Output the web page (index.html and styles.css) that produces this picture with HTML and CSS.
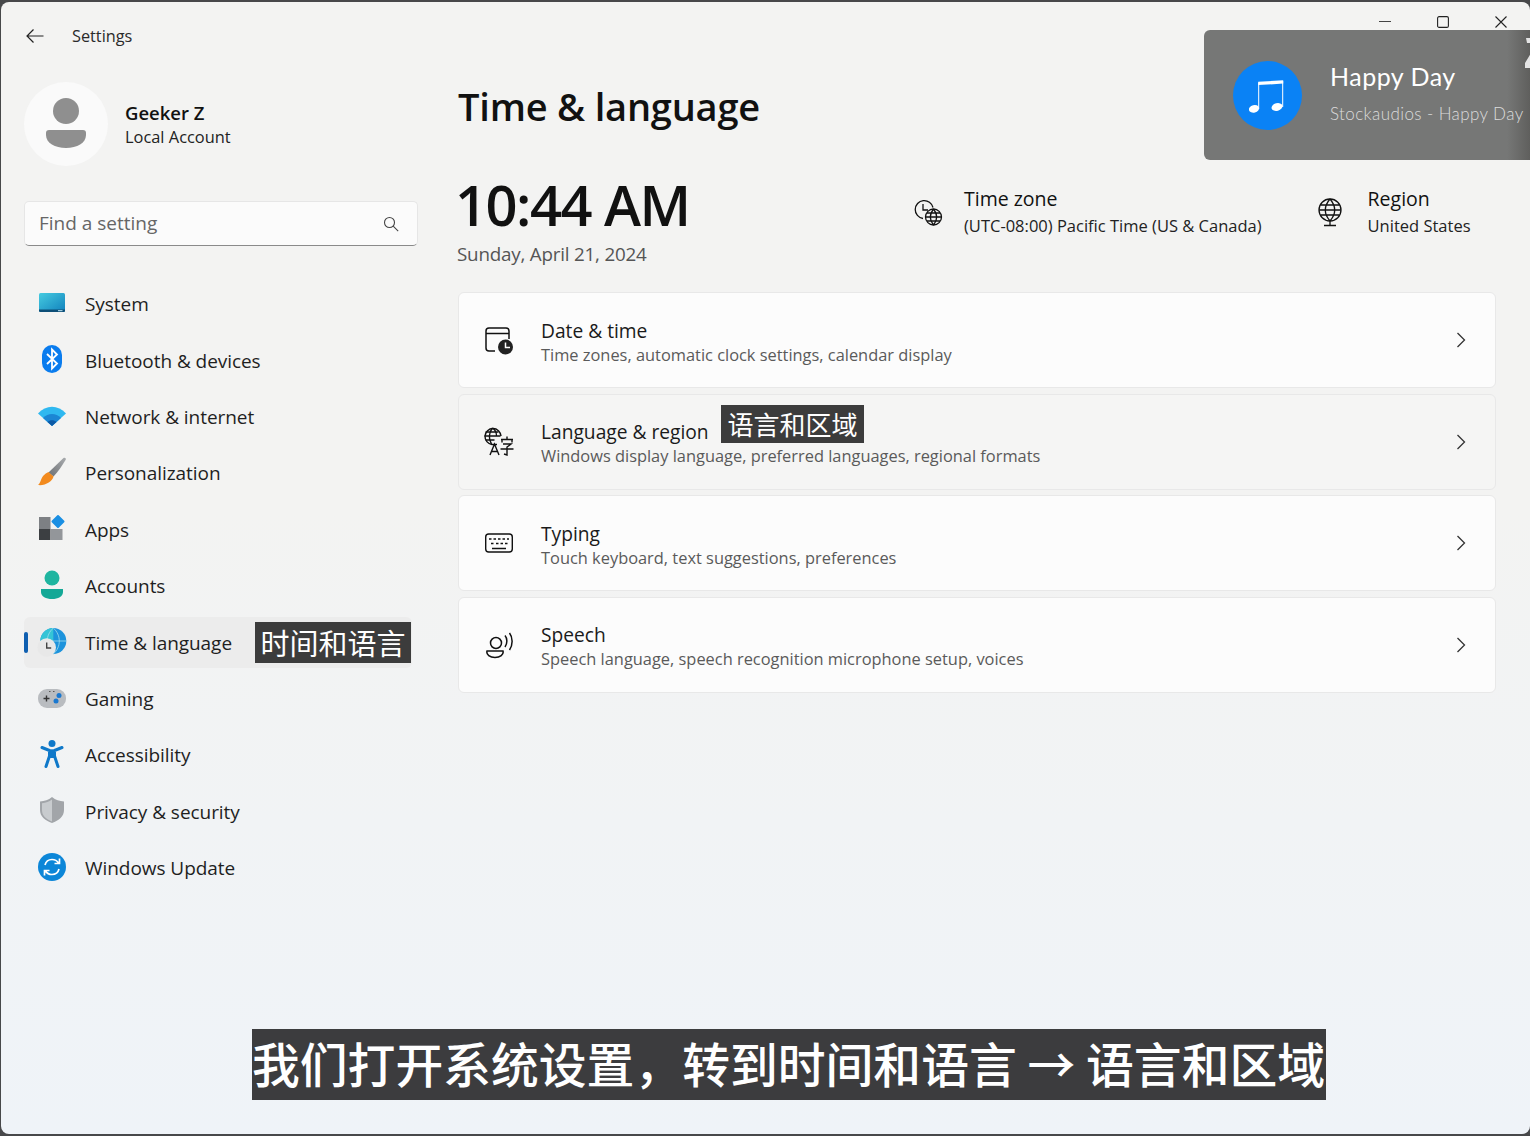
FILE: index.html
```html
<!DOCTYPE html>
<html lang="en">
<head>
<meta charset="utf-8">
<title>Settings</title>
<link rel="stylesheet" href="styles.css">
</head>
<body>
<div class="window">
  <aside class="side">
    <div class="titlebar">
      <svg class="back" width="20" height="16" viewBox="0 0 20 16"><path d="M18.5 8H2M8.5 1.5 2 8l6.500 6.500" fill="none" stroke="#222" stroke-width="1.200"/></svg>
      <span class="apptitle">Settings</span>
    </div>
    <div class="profile">
      <div class="avatar">
        <svg width="42" height="52" viewBox="0 0 42 52"><circle cx="21" cy="13" r="13" fill="#8f8f8f"/><path d="M4 32h34a3 3 0 0 1 3 3v2c0 8-9 13-20 13S1 45 1 37v-2a3 3 0 0 1 3-3z" fill="#8f8f8f"/></svg>
      </div>
      <div class="who"><div class="name">Geeker Z</div><div class="acct">Local Account</div></div>
    </div>
    <div class="search">
      <span class="hint">Find a setting</span>
      <svg width="16" height="16" viewBox="0 0 16 16"><circle cx="6.500" cy="6.500" r="5" fill="none" stroke="#444" stroke-width="1.100"/><path d="m10.200 10.200 5 5" stroke="#444" stroke-width="1.100"/></svg>
    </div>
    <nav class="nav">
      <a class="item"><span class="ic"><svg class="up2" width="28" height="22" viewBox="0 0 28 22"><defs><linearGradient id="sys" x1="0" y1="0" x2="1" y2="1"><stop offset="0" stop-color="#45cbe0"/><stop offset="1" stop-color="#1181bd"/></linearGradient></defs><rect x="1" y="1" width="26" height="19" rx="1.500" fill="url(#sys)"/><path d="M1 17.500h26v1a1.500 1.500 0 0 1-1.500 1.500h-23A1.500 1.500 0 0 1 1 18.500z" fill="#0d4e77"/><rect x="20" y="18" width="4.500" height="1.200" fill="#9ecbe0"/></svg></span>System</a>
      <a class="item"><span class="ic"><svg class="up2" width="24" height="30" viewBox="0 0 24 30"><rect x="2" y="1" width="20" height="28" rx="10" fill="#0a7cee"/><path d="M7 10l10 9.500-5 5v-19l5 5L7 20" fill="none" stroke="#fff" stroke-width="1.800"/></svg></span>Bluetooth &amp; devices</a>
      <a class="item"><span class="ic"><svg class="up2" width="30" height="22" viewBox="0 0 30 22"><path d="M1 8.500C9-.5 21-.5 29 8.500L15 21z" fill="#2fb8f0"/><path d="M6 13c5-5.500 13-5.500 18 0l-9 8z" fill="#1b86d4"/><path d="M10.500 17c2.500-2.500 6.500-2.500 9 0L15 21z" fill="#0c5aa6"/></svg></span>Network &amp; internet</a>
      <a class="item"><span class="ic"><svg class="up2" width="30" height="30" viewBox="0 0 30 30"><defs><linearGradient id="hdl" x1="1" y1="0" x2="0" y2="1"><stop offset="0" stop-color="#a8abae"/><stop offset="1" stop-color="#6d7074"/></linearGradient></defs><path d="M26.500 1c1.500-.8 2.800.2 2.200 1.800C25 9 21 15 16.500 19.500L11.500 15.500z" fill="url(#hdl)"/><path d="M11.500 15l5 4.500c-1 5-8.500 9.500-15.500 8.500 3.500-2 2-9.500 10.500-13z" fill="#f28a1e"/></svg></span>Personalization</a>
      <a class="item"><span class="ic"><svg class="up2" width="28" height="28" viewBox="0 0 28 28"><rect x="1" y="3" width="11.500" height="12" fill="#7d8084"/><rect x="1" y="15" width="11.500" height="11" fill="#3c3f42"/><rect x="12.500" y="15" width="12" height="11" fill="#93969a"/><rect x="15.100" y="2.600" width="9.800" height="9.800" rx="1" transform="rotate(45 20 7.500)" fill="#1a8fe3"/></svg></span>Apps</a>
      <a class="item"><span class="ic"><svg class="up2" width="26" height="30" viewBox="0 0 26 30"><circle cx="13" cy="8" r="7.500" fill="#1fb5a0"/><path d="M2 19h22v3c0 4.500-5 7-11 7S2 26.500 2 22z" fill="#14a896"/></svg></span>Accounts</a>
      <a class="item on"><span class="pill"></span><span class="ic"><svg width="30" height="30" viewBox="0 0 30 30"><circle cx="16.300" cy="13" r="13" fill="#1d93dc"/><path d="M16.300 0C9 0 3.300 6 3.300 13h13z" fill="#35c4d6"/><path d="M3.500 13h26M16.300 0c-8 7-8 19 0 26M16.300 0c8 7 8 19 0 26" fill="none" stroke="#9fdcec" stroke-width=".8"/><circle cx="9.700" cy="19.500" r="9.300" fill="#e8e8e8"/><path d="M9.700 14.500v5.500h4.500" fill="none" stroke="#444" stroke-width="1.400"/></svg></span>Time &amp; language<span class="tag navtag">时间和语言</span></a>
      <a class="item"><span class="ic"><svg class="up2" width="30" height="22" viewBox="0 0 30 22"><rect x="1" y="2" width="28" height="19" rx="9" fill="#b9bcc0"/><path d="M12 4.500h1.500M16 4.500h1.500" stroke="#555"/><path d="M6.500 11.500h6M9.500 8.500v6" stroke="#333" stroke-width="1.400"/><circle cx="22" cy="8.500" r="2.500" fill="#1a78d0"/><circle cx="19" cy="14" r="2.500" fill="#1a78d0"/></svg></span>Gaming</a>
      <a class="item"><span class="ic"><svg class="up2" width="26" height="30" viewBox="0 0 26 30"><circle cx="13" cy="4.500" r="3.500" fill="#0f78c9"/><path d="M3 8.500l7.500 3 2.500.5 2.500-.5 7.500-3M10.500 12v5L7 27.500M15.500 12v5l3.500 10.500" fill="none" stroke="#0f78c9" stroke-width="3" stroke-linecap="round" stroke-linejoin="round"/><path d="M10.500 11h5v8h-5z" fill="#0f78c9"/></svg></span>Accessibility</a>
      <a class="item"><span class="ic"><svg class="up2" width="28" height="28" viewBox="0 0 28 28"><path d="M14 1c3.500 3 7.500 4 12 4.500V14c0 6.500-5 10.500-12 13C7 24.500 2 20.500 2 14V5.500C6.500 5 10.500 4 14 1z" fill="#a2a5a9"/><path d="M14 3.500v22c-6-2.300-10-5.800-10-11.500V7.300c4-.5 7-1.500 10-3.800z" fill="#c8cbce"/></svg></span>Privacy &amp; security</a>
      <a class="item"><span class="ic"><svg class="up2" width="30" height="30" viewBox="0 0 30 30"><circle cx="15" cy="15" r="14" fill="#0c86d8"/><path d="M8 13c1-4 4-5.500 7-5.500 3 0 5 1 6.500 3.500M22.500 6.500V11.500H17.500M22 17c-1 4-4 5.500-7 5.500-3 0-5-1-6.500-3.500M7.500 23.500V18.500H12.500" fill="none" stroke="#fff" stroke-width="1.700"/></svg></span>Windows Update</a>
    </nav>
  </aside>
  <main class="main">
    <div class="controls">
      <svg width="12" height="12" viewBox="0 0 12 12"><path d="M0 5.500h12" stroke="#444"/></svg>
      <svg width="12" height="12" viewBox="0 0 12 12"><rect x=".6" y=".6" width="10.800" height="10.800" rx="1.500" fill="none" stroke="#222" stroke-width="1.100"/></svg>
      <svg width="12" height="12" viewBox="0 0 12 12"><path d="M.5.500l11 11M11.500.500l-11 11" stroke="#222" stroke-width="1.100"/></svg>
    </div>
    <h1 class="heading">Time &amp; language</h1>
    <section class="status">
      <div class="clock">
        <div class="time">10:44 AM</div>
        <div class="date">Sunday, April 21, 2024</div>
      </div>
      <div class="fact tz">
        <svg width="30" height="30" viewBox="0 0 30 30" fill="none" stroke="#111" stroke-width="1.300"><path d="M10 21.500a9 9 0 1 1 10-11"/><path d="M10 7v6h5"/><circle cx="20.500" cy="20" r="8"/><path d="M12.500 20h16M14 16h13M14 24h13M20.500 12c-4 5-4 11 0 16M20.500 12c4 5 4 11 0 16"/></svg>
        <div><div class="factname">Time zone</div><div class="factval">(UTC-08:00) Pacific Time (US &amp; Canada)</div></div>
      </div>
      <div class="fact region">
        <svg width="26" height="30" viewBox="0 0 26 30" fill="none" stroke="#111" stroke-width="1.300"><circle cx="13" cy="13" r="11"/><path d="M2 13h22M3.500 8h19M3.500 18h19M13 2c-6 7-6 15 0 22M13 2c6 7 6 15 0 22M13 24v4M7 28.500h12"/></svg>
        <div><div class="factname">Region</div><div class="factval">United States</div></div>
      </div>
    </section>
    <section class="cards">
      <a class="card">
        <svg class="cic" width="30" height="30" viewBox="0 0 30 30" fill="none" stroke="#111" stroke-width="1.500"><path d="M11 26H5a3 3 0 0 1-3-3V6a3 3 0 0 1 3-3h17a3 3 0 0 1 3 3v8M2 8.500h23"/><circle cx="21.500" cy="22" r="7.500" fill="#222" stroke="none"/><path d="M21.500 17.500V22.500H26" stroke="#fff"/></svg>
        <div class="ctext"><div class="ctitle">Date &amp; time</div><div class="csub">Time zones, automatic clock settings, calendar display</div></div>
        <svg class="chev" width="10" height="16" viewBox="0 0 10 16"><path d="M1.500 1 8.500 8l-7 7" fill="none" stroke="#333" stroke-width="1.300"/></svg>
      </a>
      <a class="card tint">
        <svg class="cic" width="30" height="30" viewBox="0 0 30 30" fill="none" stroke="#111" stroke-width="1.400"><path d="M13 17.500H8a8 8 0 1 1 9-8.500"/><path d="M.5 9h16M1.500 5h13M1.500 13h9M8.500 1c-4 4.500-4 11.500-1 16M8.500 1c3 2 4 5 4 8"/><path d="M6 28l4.500-11 4.500 11M7.500 24.500h6"/><path d="M17 12.500h12M18 12.500v3M28 12.500v3M19 17h8l-4 3v8l-3-1M16.500 22h13M23 9.500v3"/></svg>
        <div class="ctext"><div class="ctitle">Language &amp; region<span class="tag cardtag">语言和区域</span></div><div class="csub">Windows display language, preferred languages, regional formats</div></div>
        <svg class="chev" width="10" height="16" viewBox="0 0 10 16"><path d="M1.500 1 8.500 8l-7 7" fill="none" stroke="#333" stroke-width="1.300"/></svg>
      </a>
      <a class="card">
        <svg class="cic" width="30" height="30" viewBox="0 0 30 30" fill="none" stroke="#111" stroke-width="1.400"><rect x="1.700" y="6" width="26.600" height="18" rx="3"/><path d="M8 20.500h14M5 11h2.500M9.500 11H12M14 11h2.500M18.500 11H21M23 11h2M7 15.500h2.500M12 15.500h2.500M16.500 15.500H19M21 15.500h2.500" stroke-width="1.600"/></svg>
        <div class="ctext"><div class="ctitle">Typing</div><div class="csub">Touch keyboard, text suggestions, preferences</div></div>
        <svg class="chev" width="10" height="16" viewBox="0 0 10 16"><path d="M1.500 1 8.500 8l-7 7" fill="none" stroke="#333" stroke-width="1.300"/></svg>
      </a>
      <a class="card">
        <svg class="cic" width="30" height="30" viewBox="0 0 30 30" fill="none" stroke="#111" stroke-width="1.500"><circle cx="12" cy="13" r="5.500"/><path d="M3 21h16c1 3.500-3 6.500-8 6.500S2 24.500 3 21zM21 5.500c2.500 3 2.500 8 0 11.500M25.500 3c3.500 4.500 3.500 12 0 17"/></svg>
        <div class="ctext"><div class="ctitle">Speech</div><div class="csub">Speech language, speech recognition microphone setup, voices</div></div>
        <svg class="chev" width="10" height="16" viewBox="0 0 10 16"><path d="M1.500 1 8.500 8l-7 7" fill="none" stroke="#333" stroke-width="1.300"/></svg>
      </a>
    </section>
  </main>
</div>
<aside class="toast">
  <div class="disc"><svg width="38" height="38" viewBox="0 0 38 38"><path d="M9.700 33V6.500M33.700 31V5" fill="none" stroke="#fff" stroke-width="1"/><path d="M9.200 5.800l25-1.500v3.300l-25 1.500z" fill="#fff"/><ellipse cx="5" cy="32.800" rx="5.200" ry="3.800" fill="#fff" transform="rotate(-15 5 32.800)"/><ellipse cx="28" cy="31" rx="5.600" ry="3.800" fill="#fff" transform="rotate(-15 28 31)"/></svg></div>
  <div class="song"><div class="songname">Happy Day</div><div class="songsub">Stockaudios - Happy Day</div></div>
  <svg class="edgeglyph" width="6" height="32" viewBox="0 0 6 32"><path d="M1 0h5v5H2zM6 15v15H0v-5z" fill="#e4e4e4"/></svg>
</aside>
<div class="caption">我们打开系统设置，转到时间和语言 → 语言和区域</div>
</body>
</html>
```

FILE: styles.css
```css
* { box-sizing: border-box; }
html, body { margin: 0; height: 100%; }
body {
  width: 1530px; height: 1136px; overflow: hidden; position: relative;
  background: #47484a; padding: 2px 0 2px 1px;
  font-family: "Open Sans", "Noto Sans CJK SC", sans-serif; color: #1a1a1a;
}
.window {
  display: flex; height: 1132px; border-radius: 8px;
  background: linear-gradient(180deg, #f3f3f2 0%, #f3f3f2 45%, #eff3f8 100%);
}
.side { width: 423px; flex: none; padding: 0 0 0 22px; }
.titlebar { display: flex; align-items: center; height: 68px; }
.back { margin-left: 2px; }
.apptitle { margin-left: 27px; font-size: 16.300px; color: #2a2a2a; }
.profile { display: flex; align-items: center; margin-top: 12px; height: 84px; margin-left: 1px; }
.avatar { width: 84px; height: 84px; border-radius: 50%; background: #fafafa; display: flex; align-items: center; justify-content: center; }
.who { margin-left: 17px; padding-top: 2px; }
.name { font-size: 18.500px; font-weight: 600; line-height: 24px; color: #111; }
.acct { font-size: 16.400px; line-height: 24px; color: #222; }
.search {
  display: flex; align-items: center; justify-content: space-between;
  width: 394px; height: 45px; margin: 35px 0 0 1px; padding: 0 18px 0 14px;
  background: #fbfbfb; border: 1px solid #e6e6e6; border-bottom: 1px solid #8a8a8a; border-radius: 5px;
  font-size: 19px; color: #666;
}
.hint { margin-top: -2px; }
.nav { display: flex; flex-direction: column; gap: 5.400px; margin: 32.800px 0 0 1px; width: 388px; }
.item { display: flex; align-items: center; height: 51px; position: relative; font-size: 19px; color: #1f1f1f; border-radius: 6px; letter-spacing: -.05px; }
.item.on { background: #ececec; }
.pill { position: absolute; left: 0; top: 15px; width: 4px; height: 21px; border-radius: 2px; background: #0f5fb0; }
.ic { width: 30px; margin: 0 18px 0 13px; display: flex; align-items: center; justify-content: center; flex: none; }
.ic svg { display: block; flex: none; }
.ic .up2 { margin-top: -3px; }
.tag { background: #3c3c3c; color: #fff; letter-spacing: 0; font-family: "Noto Sans CJK SC", sans-serif; display: inline-block; }
.navtag { margin-left: 23px; width: 156px; height: 41px; font-size: 29px; line-height: 41px; text-align: center; }
.main { flex: 1; padding: 0 34px; min-width: 0; position: relative; }
.controls { position: absolute; top: 14px; right: 23px; display: flex; gap: 46px; }
.heading { margin: 78px 0 0; font-size: 38px; line-height: 52px; font-weight: 600; color: #111; letter-spacing: -.2px; }
.status { display: flex; align-items: flex-start; margin-top: 37px; height: 123px; }
.clock { width: 455px; }
.time { font-size: 56px; line-height: 70px; font-weight: 600; color: #111; letter-spacing: -1.500px; margin-left: -3px; }
.date { font-size: 18.800px; line-height: 28px; color: #555; letter-spacing: -.2px; margin-top: 1px; margin-left: -1px; }
.fact { display: flex; align-items: center; margin-top: 16px; }
.tz { gap: 21px; }
.region { margin-left: 55px; gap: 25px; }
.fact svg { flex: none; }
.factname { font-size: 19.500px; line-height: 28px; color: #111; font-weight: 500; }
.factval { font-size: 16.500px; line-height: 25px; color: #222; }
.cards { display: flex; flex-direction: column; gap: 5.500px; }
.card { display: flex; align-items: center; height: 96px; padding: 0 29px 0 25px; background: #fcfcfc; border: 1px solid #e8e8e8; border-radius: 6px; }
.card.tint { background: #f5f5f4; }
.cic { flex: none; }
.ctext { flex: 1; margin: 3px 0 0 27px; }
.ctitle { font-size: 19.200px; line-height: 25px; color: #1a1a1a; position: relative; }
.csub { font-size: 16.400px; line-height: 23px; color: #5a5a5a; }
.cardtag { position: absolute; left: 180px; top: -14px; width: 143px; height: 38px; font-size: 26px; line-height: 37px; text-align: center; }
.toast {
  position: absolute; left: 1204px; top: 30px; width: 326px; height: 130px;
  display: flex; align-items: center; padding-left: 29px;
  background: linear-gradient(90deg, #767776 0%, #767776 93%, #5f5f5d 100%); border-radius: 6px 0 0 6px; color: #fff;
}
.disc { width: 69px; height: 69px; border-radius: 50%; background: #0a82f5; display: flex; align-items: center; justify-content: center; }
.song { margin-left: 28px; margin-top: -5px; font-family: "Lato", sans-serif; white-space: nowrap; }
.songname { font-size: 25px; line-height: 32px; letter-spacing: .5px; }
.songsub { font-size: 17px; line-height: 24px; margin-top: 10px; color: #dcdcdc; font-weight: 300; letter-spacing: .4px; }
.edgeglyph { position: absolute; left: 321px; top: 8px; }
.caption {
  position: absolute; left: 252px; top: 1029px; width: 1074px; height: 71px;
  background: #3c3c3e; color: #fff; font-family: "Noto Sans CJK SC", sans-serif;
  font-size: 47.800px; line-height: 67px; font-weight: 500; white-space: nowrap;
}
```
